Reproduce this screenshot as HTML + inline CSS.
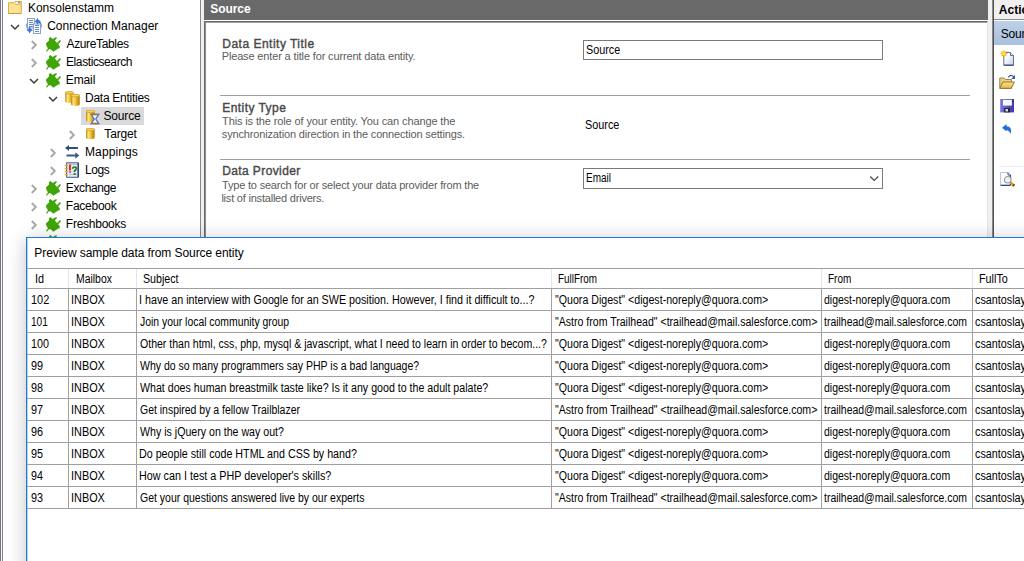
<!DOCTYPE html>
<html><head><meta charset="utf-8"><title>Source</title>
<style>
*{box-sizing:border-box;margin:0;padding:0}
html,body{width:1024px;height:561px;overflow:hidden;background:#fff}
body{position:relative;font-family:"Liberation Sans",sans-serif;color:#000}
.abs{position:absolute}
.t{position:absolute;white-space:nowrap;line-height:16px;height:16px}
.sx{transform-origin:0 0}
.hl{position:absolute;height:1px;background:#a0a0a0}
.vl{position:absolute;width:1px;background:#a0a0a0}
</style></head><body>

<div class="abs" style="left:0;top:0;width:1px;height:561px;background:#737985"></div>
<div class="abs" style="left:1px;top:0;width:1px;height:561px;background:#f4f4f4"></div>
<div class="abs" style="left:2px;top:0;width:1px;height:561px;background:#828790"></div>
<div class="abs" style="left:81px;top:107px;width:63px;height:18px;background:#d9d9d9"></div>
<svg class="abs" style="left:8px;top:0px" width="16" height="16" viewBox="0 0 16 16"><path d="M0.500 2.700 H6.200 L7 1.500 H13.300 V13.500 H0.500 Z" fill="#fbe290" stroke="#d6ae4c" stroke-width="1"/><path d="M7 4.500 H13" stroke="#e2bd63" stroke-width="1"/><path d="M0.500 13.500 H13.300" stroke="#c49a3a" stroke-width="1"/><rect x="8" y="2" width="2.200" height="1.200" fill="#fff"/><rect x="10.200" y="2" width="1.900" height="1.200" fill="#3f8fe8"/></svg>
<svg class="abs" style="left:22px;top:14px" width="24" height="24" viewBox="0 0 24 24"><rect x="5.500" y="4.500" width="7" height="9.500" fill="#f4f7fc" stroke="#8fa3c4"/><path d="M7 6.500h4M7 8.500h4M7 10.500h4M7 12.500h4" stroke="#6f86b8" stroke-width="1"/><path d="M16 6.500 Q19.800 9.500 18.600 13.500" stroke="#2f62c4" stroke-width="1.500" fill="none"/><path d="M4.700 9.500 Q3.600 13.500 6.500 16" stroke="#8fa9dc" stroke-width="1.100" fill="none"/><rect x="11.500" y="10" width="7" height="9.500" fill="#f4f7fc" stroke="#8fa3c4"/><path d="M13 11.500h4M13 13.500h4M13 15.500h4M13 17.500h4" stroke="#6f86b8" stroke-width="1"/><path d="M15.400 3.800 L16.600 6.200 L19 7.300 L16.600 8.500 L15.400 10.800 L14.200 8.500 L12.300 7.300 L14.200 6.200Z" fill="#3a74dc"/><path d="M7.700 12.500 L8.900 14.900 L11 16 L8.900 17.200 L7.700 19.600 L6.500 17.200 L4.300 16 L6.500 14.900Z" fill="#3a74dc"/></svg>
<svg class="abs" style="left:42px;top:34px" width="24" height="24" viewBox="0 0 24 24"><path d="M8.3 3.0 L10.7 5.1 L12.0 4.3 L14.1 3.0 L15.0 4.1 L12.8 6.4 L15.0 9.0 L17.9 6.0 L19.0 7.3 L16.2 10.3 L17.9 12.4 L17.5 14.5 L16.2 14.5 L11.3 17.7 L9.2 15.8 L7.3 15.0 L4.7 17.7 L4.1 16.7 L6.0 14.5 L4.1 11.1 L4.1 9.2 L7.0 6.4 L7.0 4.3Z" fill="#3fa507"/></svg>
<svg class="abs" style="left:42px;top:52px" width="24" height="24" viewBox="0 0 24 24"><path d="M8.3 3.0 L10.7 5.1 L12.0 4.3 L14.1 3.0 L15.0 4.1 L12.8 6.4 L15.0 9.0 L17.9 6.0 L19.0 7.3 L16.2 10.3 L17.9 12.4 L17.5 14.5 L16.2 14.5 L11.3 17.7 L9.2 15.8 L7.3 15.0 L4.7 17.7 L4.1 16.7 L6.0 14.5 L4.1 11.1 L4.1 9.2 L7.0 6.4 L7.0 4.3Z" fill="#3fa507"/></svg>
<svg class="abs" style="left:42px;top:70px" width="24" height="24" viewBox="0 0 24 24"><path d="M8.3 3.0 L10.7 5.1 L12.0 4.3 L14.1 3.0 L15.0 4.1 L12.8 6.4 L15.0 9.0 L17.9 6.0 L19.0 7.3 L16.2 10.3 L17.9 12.4 L17.5 14.5 L16.2 14.5 L11.3 17.7 L9.2 15.8 L7.3 15.0 L4.7 17.7 L4.1 16.7 L6.0 14.5 L4.1 11.1 L4.1 9.2 L7.0 6.4 L7.0 4.3Z" fill="#3fa507"/></svg>
<svg class="abs" style="left:42px;top:178px" width="24" height="24" viewBox="0 0 24 24"><path d="M8.3 3.0 L10.7 5.1 L12.0 4.3 L14.1 3.0 L15.0 4.1 L12.8 6.4 L15.0 9.0 L17.9 6.0 L19.0 7.3 L16.2 10.3 L17.9 12.4 L17.5 14.5 L16.2 14.5 L11.3 17.7 L9.2 15.8 L7.3 15.0 L4.7 17.7 L4.1 16.7 L6.0 14.5 L4.1 11.1 L4.1 9.2 L7.0 6.4 L7.0 4.3Z" fill="#3fa507"/></svg>
<svg class="abs" style="left:42px;top:196px" width="24" height="24" viewBox="0 0 24 24"><path d="M8.3 3.0 L10.7 5.1 L12.0 4.3 L14.1 3.0 L15.0 4.1 L12.8 6.4 L15.0 9.0 L17.9 6.0 L19.0 7.3 L16.2 10.3 L17.9 12.4 L17.5 14.5 L16.2 14.5 L11.3 17.7 L9.2 15.8 L7.3 15.0 L4.7 17.7 L4.1 16.7 L6.0 14.5 L4.1 11.1 L4.1 9.2 L7.0 6.4 L7.0 4.3Z" fill="#3fa507"/></svg>
<svg class="abs" style="left:42px;top:214px" width="24" height="24" viewBox="0 0 24 24"><path d="M8.3 3.0 L10.7 5.1 L12.0 4.3 L14.1 3.0 L15.0 4.1 L12.8 6.4 L15.0 9.0 L17.9 6.0 L19.0 7.3 L16.2 10.3 L17.9 12.4 L17.5 14.5 L16.2 14.5 L11.3 17.7 L9.2 15.8 L7.3 15.0 L4.7 17.7 L4.1 16.7 L6.0 14.5 L4.1 11.1 L4.1 9.2 L7.0 6.4 L7.0 4.3Z" fill="#3fa507"/></svg>
<svg class="abs" style="left:42px;top:232px" width="24" height="24" viewBox="0 0 24 24"><path d="M8.3 3.0 L10.7 5.1 L12.0 4.3 L14.1 3.0 L15.0 4.1 L12.8 6.4 L15.0 9.0 L17.9 6.0 L19.0 7.3 L16.2 10.3 L17.9 12.4 L17.5 14.5 L16.2 14.5 L11.3 17.7 L9.2 15.8 L7.3 15.0 L4.7 17.7 L4.1 16.7 L6.0 14.5 L4.1 11.1 L4.1 9.2 L7.0 6.4 L7.0 4.3Z" fill="#3fa507"/></svg>
<svg class="abs" style="left:65px;top:91px" width="16" height="16" viewBox="0 0 16 16"><defs><linearGradient id="g1" x1="0" x2="1" y1="0" y2="0"><stop offset="0" stop-color="#b9830f"/><stop offset="0.26" stop-color="#ffe784"/><stop offset="0.6" stop-color="#efba22"/><stop offset="1" stop-color="#ae780c"/></linearGradient></defs><path d="M0.3 1.7000000000000002 A4.1 1.3 0 0 1 8.5 1.7000000000000002 V10.6 A4.1 1.3 0 0 1 0.3 10.6 Z" fill="url(#g1)"/><ellipse cx="4.4" cy="1.7000000000000002" rx="4.1" ry="1.3" fill="#f6d058" stroke="#c39420" stroke-width="0.6"/><path d="M6 4.6 A4.35 1.3 0 0 1 14.7 4.6 V13.5 A4.35 1.3 0 0 1 6 13.5 Z" fill="url(#g1)"/><ellipse cx="10.35" cy="4.6" rx="4.35" ry="1.3" fill="#f6d058" stroke="#c39420" stroke-width="0.6"/></svg>
<svg class="abs" style="left:86px;top:110px" width="15" height="15" viewBox="0 0 15 15"><defs><linearGradient id="g2" x1="0" x2="1" y1="0" y2="0"><stop offset="0" stop-color="#b9830f"/><stop offset="0.26" stop-color="#ffe784"/><stop offset="0.6" stop-color="#efba22"/><stop offset="1" stop-color="#ae780c"/></linearGradient></defs><path d="M0 1.4000000000000001 A4.3 1.3 0 0 1 8.6 1.4000000000000001 V10.399999999999999 A4.3 1.3 0 0 1 0 10.399999999999999 Z" fill="url(#g2)"/><ellipse cx="4.3" cy="1.4000000000000001" rx="4.3" ry="1.3" fill="#f6d058" stroke="#c39420" stroke-width="0.6"/><path d="M5.300 4.500 H12.700 L9.800 9 L12.700 13.500 H5.300 L8.200 9 Z" fill="#f2f7fd" stroke="#3a7bd5" stroke-width="1.300"/><path d="M4.800 4.300 H13.200 M4.800 13.700 H13.200" stroke="#c8641e" stroke-width="1.200"/></svg>
<svg class="abs" style="left:86px;top:128px" width="10" height="12" viewBox="0 0 10 12"><defs><linearGradient id="g3" x1="0" x2="1" y1="0" y2="0"><stop offset="0" stop-color="#b9830f"/><stop offset="0.26" stop-color="#ffe784"/><stop offset="0.6" stop-color="#efba22"/><stop offset="1" stop-color="#ae780c"/></linearGradient></defs><path d="M0 1.5 A4.3 1.3 0 0 1 8.6 1.5 V9.7 A4.3 1.3 0 0 1 0 9.7 Z" fill="url(#g3)"/><ellipse cx="4.3" cy="1.5" rx="4.3" ry="1.3" fill="#f6d058" stroke="#c39420" stroke-width="0.6"/></svg>
<svg class="abs" style="left:64px;top:144px" width="16" height="16" viewBox="0 0 16 16"><path d="M3 4 H13.900" stroke="#2f4f7f" stroke-width="2"/><path d="M1 4 L5 0.900 V7.100 Z" fill="#2f4f7f"/><path d="M2.500 11.500 H13" stroke="#3a5a8a" stroke-width="2"/><path d="M15.300 11.500 L11.300 8.300 V14.700 Z" fill="#3a5a8a"/></svg>
<svg class="abs" style="left:64px;top:162px" width="16" height="16" viewBox="0 0 16 16"><path d="M2.600 0.800 H14.500 V15.300 H2.600 Z" fill="#e3e9f4" stroke="#3f5a8e" stroke-width="1"/><path d="M14 1 V15" stroke="#2a447a" stroke-width="1.200"/><path d="M5 2.500 H13 M5 12.500 H13" stroke="#aab9d6" stroke-width="0.800"/><path d="M0.700 3.500h3M0.700 6.600h3M0.700 9.600h3M0.700 12.600h3" stroke="#e8a81e" stroke-width="1.400"/><path d="M6 2.500 V8.500" stroke="#f0321e" stroke-width="2"/><rect x="5" y="9.300" width="2" height="1.400" fill="#f0321e"/><path d="M8.700 6.800 Q8.700 5 10.600 5 Q12.400 5 12.400 6.600 Q12.400 7.800 10.600 8.800 V10" stroke="#1e7d1e" stroke-width="1.700" fill="none"/><rect x="9.700" y="11" width="1.900" height="1.900" fill="#1e7d1e"/></svg>
<svg class="abs" style="left:8.5px;top:22.7px" width="12" height="8" viewBox="0 0 12 8"><path d="M2 2 L6 6 L10 2" fill="none" stroke="#3c3c3c" stroke-width="1.500"/></svg>
<svg class="abs" style="left:29.8px;top:39.4px" width="8" height="12" viewBox="0 0 8 12"><path d="M1.800 2 L5.800 6 L1.800 10" fill="none" stroke="#a8a8a8" stroke-width="1.900"/></svg>
<svg class="abs" style="left:29.8px;top:57.4px" width="8" height="12" viewBox="0 0 8 12"><path d="M1.800 2 L5.800 6 L1.800 10" fill="none" stroke="#a8a8a8" stroke-width="1.900"/></svg>
<svg class="abs" style="left:29.8px;top:183.4px" width="8" height="12" viewBox="0 0 8 12"><path d="M1.800 2 L5.800 6 L1.800 10" fill="none" stroke="#a8a8a8" stroke-width="1.900"/></svg>
<svg class="abs" style="left:29.8px;top:201.4px" width="8" height="12" viewBox="0 0 8 12"><path d="M1.800 2 L5.800 6 L1.800 10" fill="none" stroke="#a8a8a8" stroke-width="1.900"/></svg>
<svg class="abs" style="left:29.8px;top:219.4px" width="8" height="12" viewBox="0 0 8 12"><path d="M1.800 2 L5.800 6 L1.800 10" fill="none" stroke="#a8a8a8" stroke-width="1.900"/></svg>
<svg class="abs" style="left:27.7px;top:76.6px" width="12" height="8" viewBox="0 0 12 8"><path d="M2 2 L6 6 L10 2" fill="none" stroke="#3c3c3c" stroke-width="1.500"/></svg>
<svg class="abs" style="left:46.6px;top:95.0px" width="12" height="8" viewBox="0 0 12 8"><path d="M2 2 L6 6 L10 2" fill="none" stroke="#3c3c3c" stroke-width="1.500"/></svg>
<svg class="abs" style="left:67.8px;top:129.4px" width="8" height="12" viewBox="0 0 8 12"><path d="M1.800 2 L5.800 6 L1.800 10" fill="none" stroke="#a8a8a8" stroke-width="1.900"/></svg>
<svg class="abs" style="left:48.5px;top:147.4px" width="8" height="12" viewBox="0 0 8 12"><path d="M1.800 2 L5.800 6 L1.800 10" fill="none" stroke="#a8a8a8" stroke-width="1.900"/></svg>
<svg class="abs" style="left:48.5px;top:165.4px" width="8" height="12" viewBox="0 0 8 12"><path d="M1.800 2 L5.800 6 L1.800 10" fill="none" stroke="#a8a8a8" stroke-width="1.900"/></svg>
<div class="abs" style="left:200px;top:0;width:1px;height:561px;background:#828790"></div>
<div class="abs" style="left:201px;top:0;width:3px;height:561px;background:#f0f0f0"></div>
<div class="abs" style="left:204px;top:0;width:784px;height:20px;background:#696969"></div>
<div class="abs" style="left:204px;top:20px;width:784px;height:1px;background:#fff"></div>
<div class="abs" style="left:204px;top:21px;width:784px;height:540px;background:#fff;border-top:1px solid #696969;border-left:1px solid #696969;border-right:1px solid #e3e3e3"></div>
<div class="abs" style="left:205px;top:22px;width:782px;height:1px;background:#9c9c9c"></div>
<div class="abs" style="left:205px;top:22px;width:1px;height:539px;background:#8c8c8c"></div>
<div class="abs" style="left:583px;top:40px;width:300px;height:20px;border:1px solid #7a7a7a;background:#fff"></div>
<div class="hl" style="left:220px;top:95px;width:750px"></div>
<div class="hl" style="left:220px;top:159px;width:750px"></div>
<div class="abs" style="left:583px;top:168px;width:300px;height:21px;border:1px solid #7a7a7a;background:#fff"></div>
<svg class="abs" style="left:868px;top:174px" width="12" height="9" viewBox="0 0 12 9"><path d="M2.200 2.500 L6.200 6.500 L10.200 2.500" fill="none" stroke="#444" stroke-width="1.100"/></svg>
<div class="abs" style="left:988px;top:0;width:4px;height:561px;background:#f0f0f0"></div>
<div class="abs" style="left:992px;top:0;width:1px;height:561px;background:#8a8a8a"></div>
<div class="abs" style="left:993px;top:0;width:1px;height:561px;background:#505050"></div>
<div class="abs" style="left:994px;top:0;width:30px;height:561px;background:#fff"></div>
<div class="abs" style="left:994px;top:0;width:30px;height:20px;background:#f0f0f0;border-bottom:1px solid #8c8c8c"></div>
<div class="abs" style="left:994px;top:21px;width:30px;height:24px;background:linear-gradient(#bdd0e8,#a9c0dd)"></div>
<svg class="abs" style="left:999px;top:49px" width="17" height="18" viewBox="0 0 17 18"><defs><linearGradient id="pg" x1="0" y1="0" x2="1" y2="1"><stop offset="0.3" stop-color="#fff"/><stop offset="1" stop-color="#c3d0e3"/></linearGradient></defs><path d="M4.800 3.500 H11.500 L14.500 6.500 V16.200 H4.800 Z" fill="url(#pg)" stroke="#5f7391"/><path d="M11.500 3.500 V6.500 H14.500" fill="#e8eef6" stroke="#5f7391"/><path d="M4.800 16.200 H14.500" stroke="#3f5373" stroke-width="1.200"/><polygon points="9.00,4.70 6.66,5.43 7.80,7.60 5.63,6.46 4.90,8.80 4.17,6.46 2.00,7.60 3.14,5.43 0.80,4.70 3.14,3.97 2.00,1.80 4.17,2.94 4.90,0.60 5.63,2.94 7.80,1.80 6.66,3.97" fill="#f39a0c"/><circle cx="4.900" cy="4.700" r="1.900" fill="#ffe23a"/></svg>
<svg class="abs" style="left:999px;top:74px" width="17" height="16" viewBox="0 0 17 16"><defs><linearGradient id="fg" x1="0" y1="0" x2="0" y2="1"><stop offset="0" stop-color="#fae28e"/><stop offset="1" stop-color="#e9b846"/></linearGradient></defs><path d="M0.800 4 H5 L6.500 5.500 H12.500 V14.300 H0.800Z" fill="#ecd07a" stroke="#9a8448"/><path d="M0.800 14.300 L3.800 8 H15.300 L12.300 14.300Z" fill="url(#fg)" stroke="#8f7a40"/><path d="M9.300 3.300 Q12 -0.300 14.800 3" fill="none" stroke="#2f5fa8" stroke-width="1.200"/><path d="M16 1 V5 H12.300Z" fill="#2f5fa8"/></svg>
<svg class="abs" style="left:1000px;top:99px" width="14" height="14" viewBox="0 0 14 14"><defs><linearGradient id="sg" x1="0" y1="0" x2="1" y2="0"><stop offset="0" stop-color="#7b79da"/><stop offset="0.5" stop-color="#5a55c8"/><stop offset="1" stop-color="#3f3aa8"/></linearGradient></defs><rect x="0.200" y="0" width="13.800" height="13.400" fill="url(#sg)"/><rect x="2.900" y="0.800" width="9" height="5.800" fill="#f6f8fc"/><rect x="4.100" y="9.100" width="6" height="4.300" fill="#25252d"/><rect x="5.500" y="10" width="2.500" height="2.500" fill="#d8dcea"/><rect x="12.300" y="1.300" width="0.900" height="1.500" fill="#25252d"/></svg>
<svg class="abs" style="left:1000px;top:122px" width="14" height="14" viewBox="0 0 14 14"><path d="M2.100 5.750 L6.500 1.900 V4.300 Q12.600 4.500 10.600 12.300 Q9.400 8.300 6.500 8 V9.600 Z" fill="#1f6fd8"/></svg>
<div class="abs" style="left:999px;top:166px;width:25px;height:1px;background:#ebebeb"></div>
<svg class="abs" style="left:1000px;top:171px" width="16" height="17" viewBox="0 0 16 17"><path d="M0.600 1.500 H8 L10.500 4 V14.200 H0.600Z" fill="#fff" stroke="#a9bcd9" stroke-width="0.900"/><path d="M0.600 14.300 H10.500 M10.500 4 V14.300" stroke="#2a4a80" stroke-width="1.200" fill="none"/><path d="M8 1.500 V4 H10.500" fill="#dfe7f3" stroke="#2a4a80"/><circle cx="7.750" cy="8.750" r="3.300" fill="#eaf1fb" stroke="#9a9a9a" stroke-width="1.100"/><path d="M10.300 11.300 L14 14.600" stroke="#e8961e" stroke-width="2.600"/><path d="M13 13.700 L14.300 14.900" stroke="#6a4a1a" stroke-width="2.400"/></svg>
<div class="abs" style="left:26px;top:237px;width:1100px;height:400px;background:#fff;border-left:1px solid #1c7bd8;border-top:1px solid #1c7bd8;box-shadow:0 3px 18px rgba(0,0,0,0.24)"></div>
<div class="abs" style="left:27px;top:238px;width:1px;height:323px;background:#b4d3f2"></div>
<div class="hl" style="left:27px;top:268px;width:997px"></div>
<div class="hl" style="left:27px;top:288px;width:997px"></div>
<div class="hl" style="left:27px;top:310px;width:997px"></div>
<div class="hl" style="left:27px;top:332px;width:997px"></div>
<div class="hl" style="left:27px;top:354px;width:997px"></div>
<div class="hl" style="left:27px;top:376px;width:997px"></div>
<div class="hl" style="left:27px;top:398px;width:997px"></div>
<div class="hl" style="left:27px;top:420px;width:997px"></div>
<div class="hl" style="left:27px;top:442px;width:997px"></div>
<div class="hl" style="left:27px;top:464px;width:997px"></div>
<div class="hl" style="left:27px;top:486px;width:997px"></div>
<div class="hl" style="left:27px;top:508px;width:997px"></div>
<div class="vl" style="left:68px;top:269px;height:19px;background:#e5e5e5"></div>
<div class="vl" style="left:68px;top:288px;height:221px"></div>
<div class="vl" style="left:136px;top:269px;height:19px;background:#e5e5e5"></div>
<div class="vl" style="left:136px;top:288px;height:221px"></div>
<div class="vl" style="left:551px;top:269px;height:19px;background:#e5e5e5"></div>
<div class="vl" style="left:551px;top:288px;height:221px"></div>
<div class="vl" style="left:821px;top:269px;height:19px;background:#e5e5e5"></div>
<div class="vl" style="left:821px;top:288px;height:221px"></div>
<div class="vl" style="left:972px;top:269px;height:19px;background:#e5e5e5"></div>
<div class="vl" style="left:972px;top:288px;height:221px"></div>
<span class="t" style="left:27.93px;top:0px;font-size:12px;color:#000;">Konsolenstamm</span>
<span class="t" style="left:47.21px;top:18px;font-size:12px;color:#000;letter-spacing:-0.016px;">Connection Manager</span>
<span class="t" style="left:66.52px;top:36px;font-size:12px;color:#000;letter-spacing:-0.361px;">AzureTables</span>
<span class="t" style="left:66.03px;top:54px;font-size:12px;color:#000;letter-spacing:-0.408px;">Elasticsearch</span>
<span class="t" style="left:65.73px;top:72px;font-size:12px;color:#000;letter-spacing:-0.091px;">Email</span>
<span class="t" style="left:85.03px;top:90px;font-size:12px;color:#000;letter-spacing:-0.269px;">Data Entities</span>
<span class="t" style="left:103.44px;top:108px;font-size:12px;color:#000;letter-spacing:-0.157px;">Source</span>
<span class="t" style="left:104.37px;top:126px;font-size:12px;color:#000;letter-spacing:-0.154px;">Target</span>
<span class="t" style="left:85.03px;top:144px;font-size:12px;color:#000;letter-spacing:0.111px;">Mappings</span>
<span class="t" style="left:85.03px;top:162px;font-size:12px;color:#000;letter-spacing:-0.407px;">Logs</span>
<span class="t" style="left:65.83px;top:180px;font-size:12px;color:#000;letter-spacing:-0.393px;">Exchange</span>
<span class="t" style="left:65.83px;top:198px;font-size:12px;color:#000;letter-spacing:-0.254px;">Facebook</span>
<span class="t" style="left:65.83px;top:216px;font-size:12px;color:#000;letter-spacing:-0.252px;">Freshbooks</span>
<span class="t" style="left:210.19px;top:1px;font-size:12px;color:#fff;font-weight:bold;letter-spacing:-0.044px;">Source</span>
<span class="t" style="left:998.81px;top:2px;font-size:12px;color:#000;font-weight:bold;">Actions</span>
<span class="t" style="left:1000.64px;top:26px;font-size:12px;color:#000;letter-spacing:-0.157px;">Source</span>
<span class="t" style="left:222.27px;top:36px;font-size:12px;color:#484848;-webkit-text-stroke:0.38px #484848;letter-spacing:0.492px;">Data Entity Title</span>
<span class="t" style="left:221.69px;top:48px;font-size:11px;color:#5c5c5c;letter-spacing:-0.147px;">Please enter a title for current data entity.</span>
<span class="t" style="left:222.27px;top:100px;font-size:12px;color:#484848;-webkit-text-stroke:0.38px #484848;letter-spacing:0.442px;">Entity Type</span>
<span class="t" style="left:222.05px;top:113px;font-size:11px;color:#5c5c5c;letter-spacing:-0.124px;">This is the role of your entity. You can change the</span>
<span class="t" style="left:221.85px;top:126px;font-size:11px;color:#5c5c5c;letter-spacing:-0.155px;">synchronization direction in the connection settings.</span>
<span class="t" style="left:222.27px;top:163px;font-size:12px;color:#484848;-webkit-text-stroke:0.38px #484848;letter-spacing:0.384px;">Data Provider</span>
<span class="t" style="left:222.05px;top:177px;font-size:11px;color:#5c5c5c;letter-spacing:-0.193px;">Type to search for or select your data provider from the</span>
<span class="t" style="left:221.39px;top:190px;font-size:11px;color:#5c5c5c;letter-spacing:-0.207px;">list of installed drivers.</span>
<span class="t sx" style="left:585.61px;top:42px;font-size:12px;color:#000;transform:scaleX(0.8996);">Source</span>
<span class="t sx" style="left:585.31px;top:117px;font-size:12px;color:#000;transform:scaleX(0.9050);">Source</span>
<span class="t sx" style="left:585.67px;top:170px;font-size:12px;color:#000;transform:scaleX(0.8326);">Email</span>
<span class="t" style="left:34.33px;top:245px;font-size:12px;color:#000;letter-spacing:-0.075px;">Preview sample data from Source entity</span>
<span class="t sx" style="left:35.39px;top:271px;font-size:12px;color:#000;transform:scaleX(0.9059);">Id</span>
<span class="t sx" style="left:75.54px;top:271px;font-size:12px;color:#000;transform:scaleX(0.8692);">Mailbox</span>
<span class="t sx" style="left:143.12px;top:271px;font-size:12px;color:#000;transform:scaleX(0.8882);">Subject</span>
<span class="t sx" style="left:558.28px;top:271px;font-size:12px;color:#000;transform:scaleX(0.8247);">FullFrom</span>
<span class="t sx" style="left:828.38px;top:271px;font-size:12px;color:#000;transform:scaleX(0.8292);">From</span>
<span class="t sx" style="left:979.32px;top:271px;font-size:12px;color:#000;transform:scaleX(0.8991);">FullTo</span>
<span class="t sx" style="left:31.14px;top:292px;font-size:12px;color:#000;transform:scaleX(0.9091);">102</span>
<span class="t sx" style="left:71.39px;top:292px;font-size:12px;color:#000;transform:scaleX(0.9068);">INBOX</span>
<span class="t sx" style="left:139.21px;top:292px;font-size:12px;color:#000;transform:scaleX(0.8947);">I have an interview with Google for an SWE position. However, I find it difficult to...?</span>
<span class="t sx" style="left:554.92px;top:292px;font-size:12px;color:#000;transform:scaleX(0.8853);">"Quora Digest" &lt;digest-noreply@quora.com&gt;</span>
<span class="t sx" style="left:824.18px;top:292px;font-size:12px;color:#000;transform:scaleX(0.8749);">digest-noreply@quora.com</span>
<span class="t sx" style="left:974.99px;top:292px;font-size:12px;color:#000;transform:scaleX(0.8988);">csantoslay@gmail.com</span>
<span class="t sx" style="left:31.20px;top:314px;font-size:12px;color:#000;transform:scaleX(0.8409);">101</span>
<span class="t sx" style="left:71.39px;top:314px;font-size:12px;color:#000;transform:scaleX(0.9068);">INBOX</span>
<span class="t sx" style="left:139.83px;top:314px;font-size:12px;color:#000;transform:scaleX(0.8666);">Join your local community group</span>
<span class="t sx" style="left:554.92px;top:314px;font-size:12px;color:#000;transform:scaleX(0.8798);">"Astro from Trailhead" &lt;trailhead@mail.salesforce.com&gt;</span>
<span class="t sx" style="left:824.25px;top:314px;font-size:12px;color:#000;transform:scaleX(0.8707);">trailhead@mail.salesforce.com</span>
<span class="t sx" style="left:974.99px;top:314px;font-size:12px;color:#000;transform:scaleX(0.8988);">csantoslay@gmail.com</span>
<span class="t sx" style="left:31.15px;top:336px;font-size:12px;color:#000;transform:scaleX(0.8979);">100</span>
<span class="t sx" style="left:71.39px;top:336px;font-size:12px;color:#000;transform:scaleX(0.9068);">INBOX</span>
<span class="t sx" style="left:139.63px;top:336px;font-size:12px;color:#000;transform:scaleX(0.8791);">Other than html, css, php, mysql &amp; javascript, what I need to learn in order to becom...?</span>
<span class="t sx" style="left:554.92px;top:336px;font-size:12px;color:#000;transform:scaleX(0.8853);">"Quora Digest" &lt;digest-noreply@quora.com&gt;</span>
<span class="t sx" style="left:824.18px;top:336px;font-size:12px;color:#000;transform:scaleX(0.8749);">digest-noreply@quora.com</span>
<span class="t sx" style="left:974.99px;top:336px;font-size:12px;color:#000;transform:scaleX(0.8988);">csantoslay@gmail.com</span>
<span class="t sx" style="left:31.36px;top:358px;font-size:12px;color:#000;transform:scaleX(0.9022);">99</span>
<span class="t sx" style="left:71.39px;top:358px;font-size:12px;color:#000;transform:scaleX(0.9068);">INBOX</span>
<span class="t sx" style="left:140.02px;top:358px;font-size:12px;color:#000;transform:scaleX(0.8762);">Why do so many programmers say PHP is a bad language?</span>
<span class="t sx" style="left:554.92px;top:358px;font-size:12px;color:#000;transform:scaleX(0.8853);">"Quora Digest" &lt;digest-noreply@quora.com&gt;</span>
<span class="t sx" style="left:824.18px;top:358px;font-size:12px;color:#000;transform:scaleX(0.8749);">digest-noreply@quora.com</span>
<span class="t sx" style="left:974.99px;top:358px;font-size:12px;color:#000;transform:scaleX(0.8988);">csantoslay@gmail.com</span>
<span class="t sx" style="left:31.36px;top:380px;font-size:12px;color:#000;transform:scaleX(0.9004);">98</span>
<span class="t sx" style="left:71.39px;top:380px;font-size:12px;color:#000;transform:scaleX(0.9068);">INBOX</span>
<span class="t sx" style="left:140.02px;top:380px;font-size:12px;color:#000;transform:scaleX(0.8863);">What does human breastmilk taste like? Is it any good to the adult palate?</span>
<span class="t sx" style="left:554.92px;top:380px;font-size:12px;color:#000;transform:scaleX(0.8853);">"Quora Digest" &lt;digest-noreply@quora.com&gt;</span>
<span class="t sx" style="left:824.18px;top:380px;font-size:12px;color:#000;transform:scaleX(0.8749);">digest-noreply@quora.com</span>
<span class="t sx" style="left:974.99px;top:380px;font-size:12px;color:#000;transform:scaleX(0.8988);">csantoslay@gmail.com</span>
<span class="t sx" style="left:31.36px;top:402px;font-size:12px;color:#000;transform:scaleX(0.9023);">97</span>
<span class="t sx" style="left:71.39px;top:402px;font-size:12px;color:#000;transform:scaleX(0.9068);">INBOX</span>
<span class="t sx" style="left:139.58px;top:402px;font-size:12px;color:#000;transform:scaleX(0.8722);">Get inspired by a fellow Trailblazer</span>
<span class="t sx" style="left:554.92px;top:402px;font-size:12px;color:#000;transform:scaleX(0.8798);">"Astro from Trailhead" &lt;trailhead@mail.salesforce.com&gt;</span>
<span class="t sx" style="left:824.25px;top:402px;font-size:12px;color:#000;transform:scaleX(0.8707);">trailhead@mail.salesforce.com</span>
<span class="t sx" style="left:974.99px;top:402px;font-size:12px;color:#000;transform:scaleX(0.8988);">csantoslay@gmail.com</span>
<span class="t sx" style="left:31.36px;top:424px;font-size:12px;color:#000;transform:scaleX(0.9012);">96</span>
<span class="t sx" style="left:71.39px;top:424px;font-size:12px;color:#000;transform:scaleX(0.9068);">INBOX</span>
<span class="t sx" style="left:140.02px;top:424px;font-size:12px;color:#000;transform:scaleX(0.8842);">Why is jQuery on the way out?</span>
<span class="t sx" style="left:554.92px;top:424px;font-size:12px;color:#000;transform:scaleX(0.8853);">"Quora Digest" &lt;digest-noreply@quora.com&gt;</span>
<span class="t sx" style="left:824.18px;top:424px;font-size:12px;color:#000;transform:scaleX(0.8749);">digest-noreply@quora.com</span>
<span class="t sx" style="left:974.99px;top:424px;font-size:12px;color:#000;transform:scaleX(0.8988);">csantoslay@gmail.com</span>
<span class="t sx" style="left:31.36px;top:446px;font-size:12px;color:#000;transform:scaleX(0.9015);">95</span>
<span class="t sx" style="left:71.39px;top:446px;font-size:12px;color:#000;transform:scaleX(0.9068);">INBOX</span>
<span class="t sx" style="left:139.32px;top:446px;font-size:12px;color:#000;transform:scaleX(0.8918);">Do people still code HTML and CSS by hand?</span>
<span class="t sx" style="left:554.92px;top:446px;font-size:12px;color:#000;transform:scaleX(0.8853);">"Quora Digest" &lt;digest-noreply@quora.com&gt;</span>
<span class="t sx" style="left:824.18px;top:446px;font-size:12px;color:#000;transform:scaleX(0.8749);">digest-noreply@quora.com</span>
<span class="t sx" style="left:974.99px;top:446px;font-size:12px;color:#000;transform:scaleX(0.8988);">csantoslay@gmail.com</span>
<span class="t sx" style="left:31.36px;top:468px;font-size:12px;color:#000;transform:scaleX(0.8949);">94</span>
<span class="t sx" style="left:71.39px;top:468px;font-size:12px;color:#000;transform:scaleX(0.9068);">INBOX</span>
<span class="t sx" style="left:139.32px;top:468px;font-size:12px;color:#000;transform:scaleX(0.8979);">How can I test a PHP developer's skills?</span>
<span class="t sx" style="left:554.92px;top:468px;font-size:12px;color:#000;transform:scaleX(0.8853);">"Quora Digest" &lt;digest-noreply@quora.com&gt;</span>
<span class="t sx" style="left:824.18px;top:468px;font-size:12px;color:#000;transform:scaleX(0.8749);">digest-noreply@quora.com</span>
<span class="t sx" style="left:974.99px;top:468px;font-size:12px;color:#000;transform:scaleX(0.8988);">csantoslay@gmail.com</span>
<span class="t sx" style="left:31.36px;top:490px;font-size:12px;color:#000;transform:scaleX(0.9015);">93</span>
<span class="t sx" style="left:71.39px;top:490px;font-size:12px;color:#000;transform:scaleX(0.9068);">INBOX</span>
<span class="t sx" style="left:139.58px;top:490px;font-size:12px;color:#000;transform:scaleX(0.8743);">Get your questions answered live by our experts</span>
<span class="t sx" style="left:554.92px;top:490px;font-size:12px;color:#000;transform:scaleX(0.8798);">"Astro from Trailhead" &lt;trailhead@mail.salesforce.com&gt;</span>
<span class="t sx" style="left:824.25px;top:490px;font-size:12px;color:#000;transform:scaleX(0.8707);">trailhead@mail.salesforce.com</span>
<span class="t sx" style="left:974.99px;top:490px;font-size:12px;color:#000;transform:scaleX(0.8988);">csantoslay@gmail.com</span>
</body></html>
